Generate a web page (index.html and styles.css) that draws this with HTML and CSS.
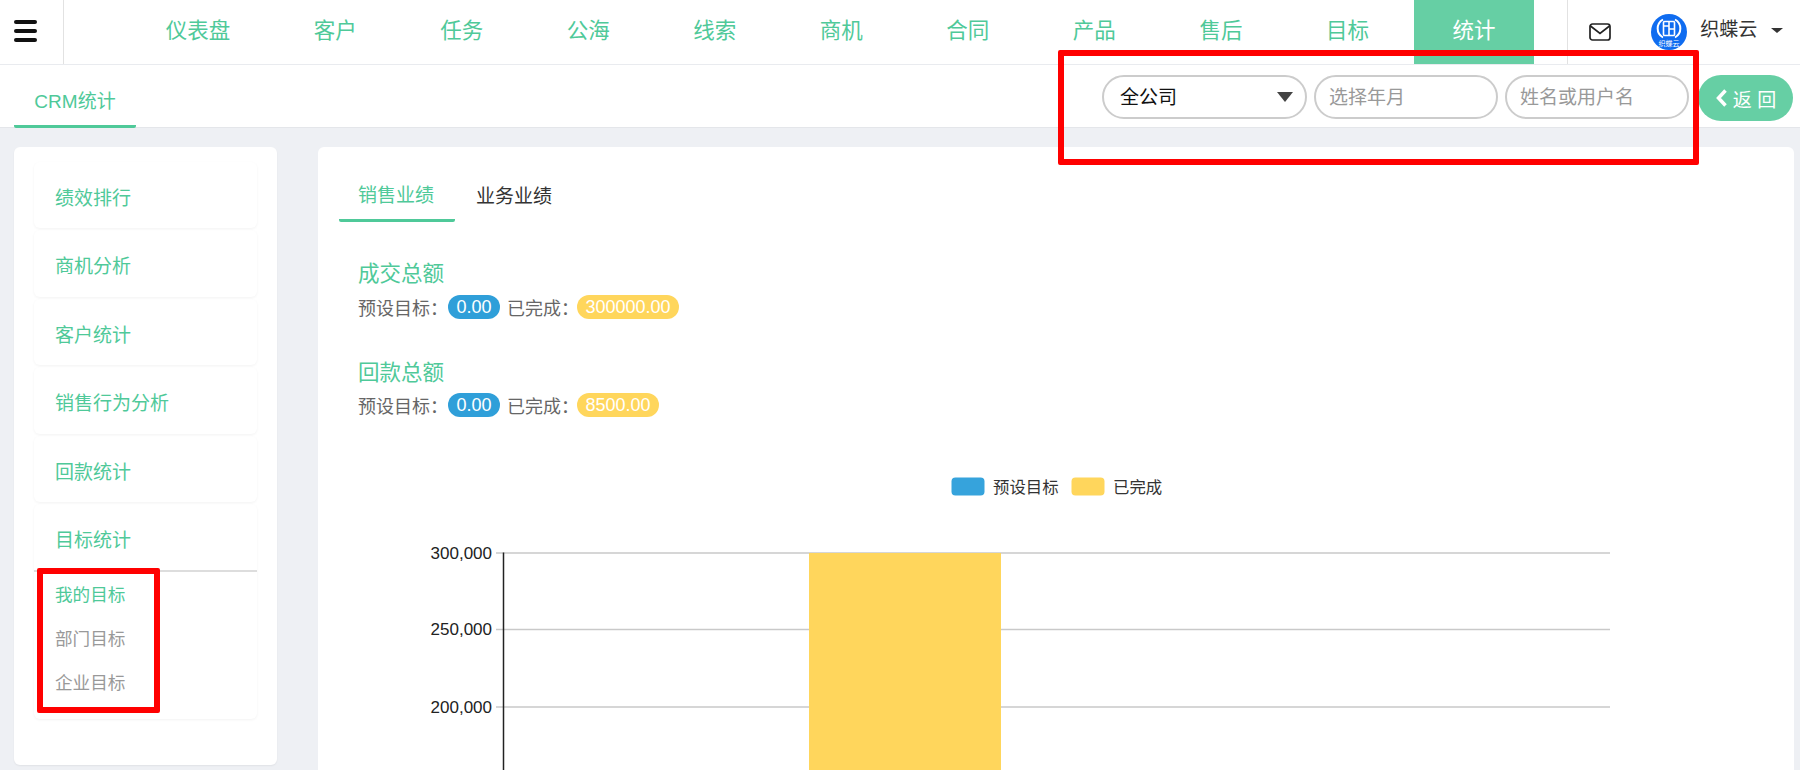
FILE: index.html
```html
<!DOCTYPE html>
<html lang="en">
<head>
  <meta charset="UTF-8" />
  <title>CRM统计</title>
  <link rel="stylesheet" href="styles.css">
</head>
<body>

  <header class="topbar">
    <div class="menu-btn"><span></span><span></span><span></span></div>
    <nav class="nav">
      <a class="nav-item">仪表盘</a>
      <a class="nav-item">客户</a>
      <a class="nav-item">任务</a>
      <a class="nav-item">公海</a>
      <a class="nav-item">线索</a>
      <a class="nav-item">商机</a>
      <a class="nav-item">合同</a>
      <a class="nav-item">产品</a>
      <a class="nav-item">售后</a>
      <a class="nav-item">目标</a>
      <a class="nav-item active">统计</a>
    </nav>
    <div class="user-area">
      <svg class="mail-icon" width="22" height="18" viewBox="0 0 22 18">
        <rect x="1" y="1" width="20" height="16" rx="2.5" fill="none" stroke="#222" stroke-width="1.7"/>
        <path d="M1.5 3 L11 10.5 L20.5 3" fill="none" stroke="#222" stroke-width="1.7"/>
      </svg>
      <svg class="avatar" width="36" height="36" viewBox="0 0 36 36">
        <circle cx="18" cy="18" r="18" fill="#0f6cf0"/>
        <path d="M12 5.5 A11 10.5 0 0 0 12 23.5 M24 5.5 A11 10.5 0 0 1 24 23.5" fill="none" stroke="#fff" stroke-width="2"/>
        <rect x="12.5" y="7.5" width="11" height="14" rx="1" fill="none" stroke="#fff" stroke-width="1.6"/>
        <path d="M18 7.5 V21.5 M12.5 12 H18 M18 15 H23.5" stroke="#fff" stroke-width="1.6"/>
        <text x="18" y="31.5" class="avatar-text">织蝶云</text>
      </svg>
      <span class="user-name">织蝶云</span>
      <span class="caret"></span>
    </div>
  </header>

  <div class="subbar">
    <a class="sub-tab">CRM统计</a>
    <div class="filters">
      <div class="filter filter-select">全公司<span class="select-arrow"></span></div>
      <div class="filter">选择年月</div>
      <div class="filter">姓名或用户名</div>
      <div class="back-btn">
        <svg width="13" height="20" viewBox="0 0 13 20"><path d="M10.5 2.5 L3.5 10 L10.5 17.5" fill="none" stroke="#fff" stroke-width="3.5"/></svg>
        返 回
      </div>
    </div>
  </div>

  <main class="content">
    <aside class="side-card">
      <div class="side-item">绩效排行</div>
      <div class="side-item">商机分析</div>
      <div class="side-item">客户统计</div>
      <div class="side-item">销售行为分析</div>
      <div class="side-item">回款统计</div>
      <div class="side-group">
        <div class="side-group-title">目标统计</div>
        <a class="side-link current">我的目标</a>
        <a class="side-link">部门目标</a>
        <a class="side-link">企业目标</a>
      </div>
    </aside>

    <section class="main-card">
      <div class="tabs">
        <a class="tab active">销售业绩</a>
        <a class="tab">业务业绩</a>
      </div>

      <div class="stat">
        <div class="stat-title">成交总额</div>
        <div class="stat-row">
          <span>预设目标：</span><span class="badge blue">0.00</span>
          <span class="done-label">已完成：</span><span class="badge yellow">300000.00</span>
        </div>
      </div>

      <div class="stat">
        <div class="stat-title">回款总额</div>
        <div class="stat-row">
          <span>预设目标：</span><span class="badge blue">0.00</span>
          <span class="done-label">已完成：</span><span class="badge yellow">8500.00</span>
        </div>
      </div>

      <svg class="chart" width="1300" height="320" viewBox="0 0 1300 320">
        <!-- svg origin is page x 340, y 450 -->
        <rect x="612.5" y="26.5" width="33" height="18" rx="4" fill="#36a3dc"/>
        <text x="654" y="42" class="legend">预设目标</text>
        <rect x="732.5" y="26.5" width="33" height="18" rx="4" fill="#ffd65c"/>
        <text x="774" y="42" class="legend">已完成</text>

        <line x1="157" y1="102" x2="1271" y2="102" class="grid"/>
        <line x1="157" y1="178.5" x2="1271" y2="178.5" class="grid"/>
        <line x1="157" y1="256" x2="1271" y2="256" class="grid"/>

        <rect x="470" y="102" width="192" height="218" fill="#ffd65c"/>

        <line x1="164.5" y1="101.5" x2="164.5" y2="320" stroke="#222" stroke-width="1.5"/>
        <text x="153" y="108" class="tick">300,000</text>
        <text x="153" y="184" class="tick">250,000</text>
        <text x="153" y="262" class="tick">200,000</text>
      </svg>
    </section>
  </main>

  <!-- red marks drawn over the screenshot -->
  <div class="mark mark-filters"></div>
  <div class="mark mark-links"></div>

</body>
</html>
```

FILE: styles.css
```css
* {
  box-sizing: border-box;
}
html, body {
  height: 770px;
  overflow: hidden;
}
body {
  margin: 0;
  position: relative;
  background-color: #eef0f4;
  font-family: "Liberation Sans", "Noto Sans CJK SC", sans-serif;
  color: #333;
}

/* top bar */
.topbar {
  display: flex;
  height: 65px;
  background-color: #fff;
  border-bottom: 1px solid #e9ebef;
}
.menu-btn {
  display: flex;
  flex-direction: column;
  gap: 5px;
  width: 64px;
  padding: 20px 0 0 14px;
  border-right: 1px solid #e2e2e2;
}
.menu-btn span {
  display: block;
  width: 23px;
  height: 4px;
  background-color: #111;
  border-radius: 2px;
}
.nav {
  display: flex;
  padding-left: 60px;
}
.nav-item {
  margin: 0 3px;
  padding: 0 38.75px;
  font-size: 21.5px;
  line-height: 63px;
  color: #4fc999;
}
.nav-item.active {
  background-color: #66cfa4;
  color: #fff;
}
.user-area {
  display: flex;
  align-items: center;
  flex: 1;
  margin-left: 30px;
  border-left: 1px solid #e2e2e2;
  padding-left: 21px;
}
.avatar {
  margin-left: 40px;
  margin-bottom: 1px;
}
.avatar-text {
  font-size: 7px;
  fill: #fff;
  text-anchor: middle;
}
.user-name {
  margin-left: 13px;
  margin-bottom: 10px;
  font-size: 19px;
  color: #333;
}
.caret {
  width: 0;
  height: 0;
  margin-left: 14px;
  margin-bottom: 4px;
  border-left: 6px solid transparent;
  border-right: 6px solid transparent;
  border-top: 5px solid #333;
}

/* second bar */
.subbar {
  display: flex;
  justify-content: space-between;
  height: 63px;
  padding: 0 7px 0 14px;
  background-color: #fff;
  border-bottom: 1px solid #e4e6ea;
}
.sub-tab {
  width: 122px;
  height: 63px;
  font-size: 19px;
  line-height: 74px;
  text-align: center;
  color: #4fc999;
  border-bottom: 3px solid #4fc999;
  border-radius: 0 0 2px 2px;
}
.filters {
  display: flex;
  align-items: flex-start;
  padding-top: 10px;
}
.filter {
  width: 184px;
  height: 44px;
  margin-right: 7px;
  padding-left: 13px;
  font-size: 19px;
  line-height: 42px;
  color: #999;
  background-color: #fff;
  border: 2px solid #ccc;
  border-radius: 22px;
}
.filter-select {
  position: relative;
  width: 205px;
  padding-left: 16px;
  color: #111;
}
.select-arrow {
  position: absolute;
  top: 15px;
  right: 12px;
  width: 0;
  height: 0;
  border-left: 8px solid transparent;
  border-right: 8px solid transparent;
  border-top: 10px solid #444;
}
.back-btn {
  display: flex;
  align-items: center;
  justify-content: center;
  gap: 5px;
  width: 95px;
  height: 46px;
  margin-left: 2px;
  font-size: 19px;
  color: #fff;
  background-color: #66cfa4;
  border-radius: 23px;
}

/* page content */
.content {
  display: flex;
  align-items: flex-start;
  gap: 41px;
  padding: 19px 6px 0 14px;
}
.side-card {
  flex: none;
  width: 263px;
  height: 618px;
  padding: 15px 20px 0;
  background-color: #fff;
  border-radius: 6px;
  box-shadow: 0 1px 2px rgba(0, 0, 0, 0.06);
}
.side-item, .side-group {
  margin-bottom: 2px;
  border-radius: 6px;
  box-shadow: 0 1px 3px rgba(0, 0, 0, 0.05);
}
.side-item {
  height: 66.4px;
  padding-left: 21px;
  font-size: 19px;
  line-height: 73px;
  color: #4fc999;
}
.side-group {
  height: 215px;
}
.side-group-title {
  height: 68.5px;
  padding-left: 21px;
  font-size: 19px;
  line-height: 73px;
  color: #4fc999;
  border-bottom: 2px solid #ddd;
}
.side-link {
  display: block;
  padding-left: 21px;
  font-size: 17.6px;
  line-height: 43.8px;
  color: #999;
}
.side-link:first-of-type {
  margin-top: 2px;
}
.side-link.current {
  color: #4fc999;
}

.main-card {
  flex: 1;
  height: 640px;
  padding: 23px 21px 0;
  background-color: #fff;
  border-radius: 6px;
}
.tabs {
  display: flex;
  gap: 21px;
  height: 52px;
}
.tab {
  padding: 0 21px 0 19px;
  font-size: 19px;
  line-height: 51px;
}
.tab + .tab {
  padding: 0;
  line-height: 54px;
}
.tab.active {
  color: #4fc999;
  border-bottom: 3px solid #4fc999;
  border-radius: 0 0 2px 2px;
}
.stat {
  height: 98.5px;
  padding-left: 19px;
}
.tabs + .stat {
  margin-top: 36px;
}
.stat-title {
  font-size: 21.5px;
  line-height: 32px;
  color: #4fc999;
}
.stat-row {
  display: flex;
  align-items: center;
  height: 29px;
  margin-top: 2px;
  font-size: 18px;
  color: #666;
}
.badge {
  display: block;
  height: 24px;
  padding: 0 8.5px;
  font-size: 18px;
  line-height: 24px;
  color: #fff;
  border-radius: 12px;
}
.badge.blue {
  background-color: #2f9fd9;
}
.badge.yellow {
  background-color: #ffd65c;
}
.done-label {
  margin: 0 -2px 0 7px;
}

.chart {
  display: block;
  margin: -4px 0 0 0;
  overflow: visible;
}
.legend {
  font-size: 16.4px;
  fill: #333;
}
.tick {
  font-size: 17px;
  fill: #222;
  text-anchor: end;
}
.grid {
  stroke: #c9c9c9;
  stroke-width: 1.5;
}

/* red marks */
.mark {
  position: absolute;
  border: 6px solid #f00;
  border-radius: 2px;
}
.mark-filters {
  left: 1058px;
  top: 50px;
  width: 641px;
  height: 115px;
}
.mark-links {
  left: 37px;
  top: 568px;
  width: 123px;
  height: 145px;
}
```
